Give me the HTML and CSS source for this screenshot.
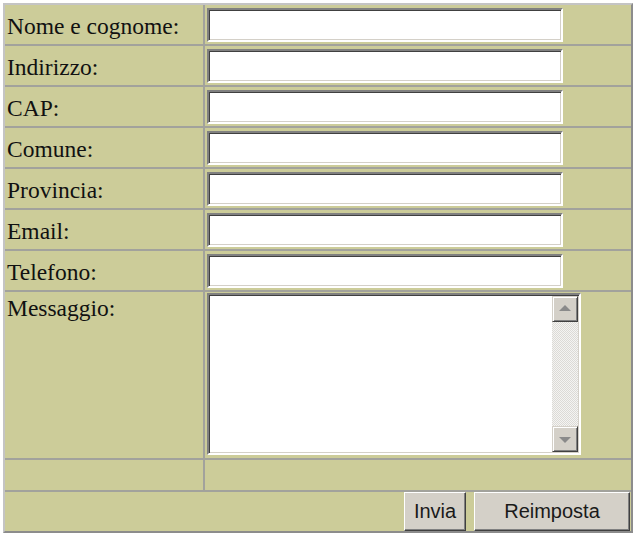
FILE: index.html
```html
<!DOCTYPE html>
<html lang="it">
<head>
<meta charset="utf-8">
<title>Modulo contatti</title>
<link rel="stylesheet" href="styles.css">
</head>
<body>
<form class="form">
  <div class="grid">
    <div class="cell label">Nome e cognome:</div>
    <div class="cell field"><input class="text" type="text"></div>
    <div class="cell label">Indirizzo:</div>
    <div class="cell field"><input class="text" type="text"></div>
    <div class="cell label">CAP:</div>
    <div class="cell field"><input class="text" type="text"></div>
    <div class="cell label">Comune:</div>
    <div class="cell field"><input class="text" type="text"></div>
    <div class="cell label">Provincia:</div>
    <div class="cell field"><input class="text" type="text"></div>
    <div class="cell label">Email:</div>
    <div class="cell field"><input class="text" type="text"></div>
    <div class="cell label">Telefono:</div>
    <div class="cell field"><input class="text" type="text"></div>
    <div class="cell label label-top">Messaggio:</div>
    <div class="cell field field-msg">
      <div class="ta">
        <textarea class="ta-input"></textarea>
        <div class="sb">
          <div class="sb-btn"><span class="arrow arrow-up"></span></div>
          <div class="sb-track"></div>
          <div class="sb-btn"><span class="arrow arrow-down"></span></div>
        </div>
      </div>
    </div>
    <div class="cell"></div>
    <div class="cell"></div>
    <div class="cell actions">
      <button class="btn btn-send" type="button">Invia</button>
      <button class="btn btn-reset" type="button">Reimposta</button>
    </div>
  </div>
</form>
</body>
</html>
```

FILE: styles.css
```css
html, body {
  margin: 0;
  padding: 0;
  background: #ffffff;
}

body {
  padding: 3px;
}

.form {
  margin: 0;
}

.grid {
  display: grid;
  grid-template-columns: 198px 426px;
  grid-template-rows: repeat(7, 39px) 166px 30px 39px;
  gap: 2px;
  width: max-content;
  background: #a2a29c;
  border: 2px solid;
  border-color: #c4c4c4 #8c8c8c #8c8c8c #c4c4c4;
}

.cell {
  background: #cccc99;
  min-width: 0;
  min-height: 0;
}

.label {
  display: flex;
  align-items: center;
  box-sizing: border-box;
  padding: 4px 0 0 2px;
  font-family: "Liberation Serif", "Times New Roman", serif;
  font-size: 23.5px;
  color: #111111;
  line-height: 1.15;
}

.label-top {
  align-items: flex-start;
  padding-top: 3px;
}

.field {
  padding: 3px 0 0 2px;
}

.field-msg {
  padding-top: 1px;
}

.text {
  display: block;
  box-sizing: border-box;
  width: 356px;
  height: 34px;
  margin: 0;
  padding: 0 4px;
  background: #ffffff;
  border: 2px solid;
  border-color: #808080 #ffffff #ffffff #808080;
  box-shadow: inset 1px 1px 0 #404040, inset -1px -1px 0 #d4d0c8;
  outline: none;
  font-family: "Liberation Sans", Arial, sans-serif;
  font-size: 18px;
}

.ta {
  display: flex;
  box-sizing: border-box;
  width: 374px;
  height: 162px;
  background: #ffffff;
  border: 2px solid;
  border-color: #808080 #ffffff #ffffff #808080;
  padding: 1px;
  box-shadow: inset 1px 1px 0 #404040, inset -1px -1px 0 #d4d0c8;
}

.ta-input {
  flex: 1;
  margin: 0;
  padding: 2px 4px;
  border: 0;
  outline: none;
  resize: none;
  background: transparent;
  font-family: "Liberation Sans", Arial, sans-serif;
  font-size: 18px;
}

.sb {
  display: flex;
  flex-direction: column;
  width: 26px;
  flex: none;
}

.sb-btn {
  box-sizing: border-box;
  height: 26px;
  display: flex;
  align-items: center;
  justify-content: center;
  background: #d4d0c8;
  border: 1px solid;
  border-color: #d4d0c8 #404040 #404040 #d4d0c8;
  box-shadow: inset 1px 1px 0 #ffffff, inset -1px -1px 0 #808080;
}

.sb-track {
  flex: 1;
  background: repeating-conic-gradient(#f4f4f2 0 25%, #dcdad6 0 50%) 0 0 / 2px 2px;
}

.arrow {
  width: 0;
  height: 0;
  border-left: 6px solid transparent;
  border-right: 6px solid transparent;
}

.arrow-up {
  border-bottom: 6px solid #8a8a8a;
  margin-top: -2px;
}

.arrow-down {
  border-top: 6px solid #8a8a8a;
  margin-top: 2px;
}

.actions {
  grid-column: 1 / span 2;
  display: flex;
  justify-content: flex-end;
  align-items: stretch;
  gap: 8px;
  padding-right: 1px;
}

.btn {
  box-sizing: border-box;
  margin: 0;
  padding: 0;
  background: #d4d0c8;
  border: 1px solid;
  border-color: #ffffff #404040 #404040 #ffffff;
  box-shadow: inset -1px -1px 0 #808080, inset 1px 1px 0 #d4d0c8;
  font-family: "Liberation Sans", Arial, sans-serif;
  font-size: 20px;
  color: #1a1a1a;
}

.btn-send {
  width: 62px;
}

.btn-reset {
  width: 156px;
}
```
